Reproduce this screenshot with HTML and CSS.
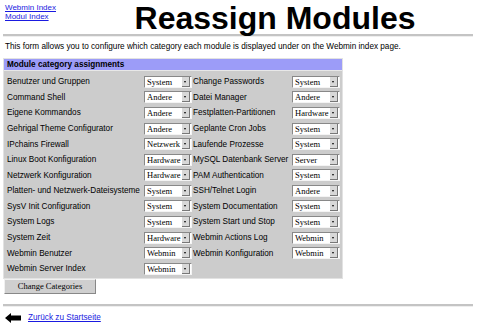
FILE: index.html
```html
<!DOCTYPE html>
<html>
<head>
<meta charset="utf-8">
<link rel="stylesheet" href="styles.css">
</head>
<body>
<div class="header">
  <div class="navlinks">
    <a href="#">Webmin Index</a>
    <a href="#">Modul Index</a>
  </div>
  <h1 class="title">Reassign Modules</h1>
</div>
<hr class="rule">
<p class="intro">This form allows you to configure which category each module is displayed under on the Webmin index page.</p>
<div class="panel">
  <div class="panel-head">Module category assignments</div>
  <div class="grid">
    <span class="lbl">Benutzer und Gruppen</span><span class="sel"><span class="val">System</span><span class="arr"></span></span>
    <span class="lbl">Change Passwords</span><span class="sel"><span class="val">System</span><span class="arr"></span></span>
    <span class="lbl">Command Shell</span><span class="sel"><span class="val">Andere</span><span class="arr"></span></span>
    <span class="lbl">Datei Manager</span><span class="sel"><span class="val">Andere</span><span class="arr"></span></span>
    <span class="lbl">Eigene Kommandos</span><span class="sel"><span class="val">Andere</span><span class="arr"></span></span>
    <span class="lbl">Festplatten-Partitionen</span><span class="sel"><span class="val">Hardware</span><span class="arr"></span></span>
    <span class="lbl">Gehrigal Theme Configurator</span><span class="sel"><span class="val">Andere</span><span class="arr"></span></span>
    <span class="lbl">Geplante Cron Jobs</span><span class="sel"><span class="val">System</span><span class="arr"></span></span>
    <span class="lbl">IPchains Firewall</span><span class="sel"><span class="val">Netzwerk</span><span class="arr"></span></span>
    <span class="lbl">Laufende Prozesse</span><span class="sel"><span class="val">System</span><span class="arr"></span></span>
    <span class="lbl">Linux Boot Konfiguration</span><span class="sel"><span class="val">Hardware</span><span class="arr"></span></span>
    <span class="lbl">MySQL Datenbank Server</span><span class="sel"><span class="val">Server</span><span class="arr"></span></span>
    <span class="lbl">Netzwerk Konfiguration</span><span class="sel"><span class="val">Hardware</span><span class="arr"></span></span>
    <span class="lbl">PAM Authentication</span><span class="sel"><span class="val">System</span><span class="arr"></span></span>
    <span class="lbl">Platten- und Netzwerk-Dateisysteme</span><span class="sel"><span class="val">System</span><span class="arr"></span></span>
    <span class="lbl">SSH/Telnet Login</span><span class="sel"><span class="val">Andere</span><span class="arr"></span></span>
    <span class="lbl">SysV Init Configuration</span><span class="sel"><span class="val">System</span><span class="arr"></span></span>
    <span class="lbl">System Documentation</span><span class="sel"><span class="val">System</span><span class="arr"></span></span>
    <span class="lbl">System Logs</span><span class="sel"><span class="val">System</span><span class="arr"></span></span>
    <span class="lbl">System Start und Stop</span><span class="sel"><span class="val">System</span><span class="arr"></span></span>
    <span class="lbl">System Zeit</span><span class="sel"><span class="val">Hardware</span><span class="arr"></span></span>
    <span class="lbl">Webmin Actions Log</span><span class="sel"><span class="val">Webmin</span><span class="arr"></span></span>
    <span class="lbl">Webmin Benutzer</span><span class="sel"><span class="val">Webmin</span><span class="arr"></span></span>
    <span class="lbl">Webmin Konfiguration</span><span class="sel"><span class="val">Webmin</span><span class="arr"></span></span>
    <span class="lbl">Webmin Server Index</span><span class="sel"><span class="val">Webmin</span><span class="arr"></span></span>
  </div>
</div>
<button class="btn" type="button">Change Categories</button>
<hr class="rule rule-bottom">
<div class="back">
  <svg class="back-arrow" width="16" height="10" viewBox="0 0 16 10"><polygon points="0,5 6,0 6,2.5 16,2.5 16,7.5 6,7.5 6,10" fill="#000"/></svg>
  <a href="#">Zurück zu Startseite</a>
</div>
</body>
</html>
```

FILE: styles.css
```css
html, body {
  margin: 0;
  padding: 0;
  background: #fff;
}
body {
  padding: 3px 3px 0 3px;
  font-family: "Liberation Sans", Arial, sans-serif;
  font-size: 8.2px;
  color: #000;
}
a {
  color: #1a1ae0;
  text-decoration: underline;
}
.header {
  display: grid;
  grid-template-columns: 72px 1fr;
  align-items: start;
  height: 29px;
}
.navlinks {
  display: flex;
  flex-direction: column;
  align-items: flex-start;
  padding: 1px 0 0 2px;
  font-size: 8px;
  line-height: 8.5px;
}
.title {
  margin: 0;
  text-align: center;
  font-size: 32px;
  font-weight: bold;
  line-height: 30px;
  letter-spacing: 0;
}
.rule {
  margin: 2px 0 0 0;
  width: 470px;
  height: 0;
  border: 0;
  border-top: 2px solid #c4c4c4;
  border-bottom: 1px solid #eeeeee;
}
.intro {
  margin: 5px 0 0 2px;
  line-height: 10px;
}
.panel {
  margin-top: 6px;
  width: 338px;
  border: 1px solid #e2e2e2;
  background: #cccccc;
  padding: 0;
}
.panel-head {
  background: #9c9cf8;
  font-weight: bold;
  height: 11px;
  line-height: 11px;
  padding-left: 3px;
  border-bottom: 1px solid #e8e8e8;
}
.grid {
  display: grid;
  grid-template-columns: 136px 48px 98px 48px;
  grid-auto-rows: 15.58px;
  align-items: center;
  padding: 3px 0 1px 3px;
  column-gap: 1px;
}
.lbl {
  white-space: nowrap;
  overflow: visible;
}
.sel {
  display: flex;
  align-items: center;
  height: 12px;
  box-sizing: border-box;
  background: #fff;
  border: 1px solid;
  border-color: #888 #f4f4f4 #f4f4f4 #888;
  font-family: "Liberation Serif", "Times New Roman", serif;
  font-size: 8.5px;
}
.val {
  flex: 1;
  padding-left: 2px;
  line-height: 10px;
  white-space: nowrap;
  overflow: hidden;
}
.arr {
  position: relative;
  width: 7px;
  height: 9px;
  margin-right: 1px;
  background: #d8d8d8;
  border: 0 solid;
  border-color: #fff #777 #777 #fff;
  border-width: 0 1px 1px 0;
}
.arr::after {
  content: "";
  position: absolute;
  left: 2px;
  top: 4px;
  border-left: 1.5px solid transparent;
  border-right: 1.5px solid transparent;
  border-top: 2px solid #000;
}
.btn {
  display: block;
  margin: 0 0 0 1px;
  width: 92px;
  height: 15px;
  padding: 0;
  background: #cfcfcf;
  border: 1px solid;
  border-color: #f0f0f0 #888 #888 #f0f0f0;
  font-family: "Liberation Serif", "Times New Roman", serif;
  font-size: 8.5px;
  color: #000;
}
.rule-bottom {
  margin-top: 10px;
}
.back {
  display: flex;
  align-items: center;
  gap: 7px;
  margin-top: 6px;
  padding-left: 2px;
}
.back-arrow {
  display: block;
}
```
